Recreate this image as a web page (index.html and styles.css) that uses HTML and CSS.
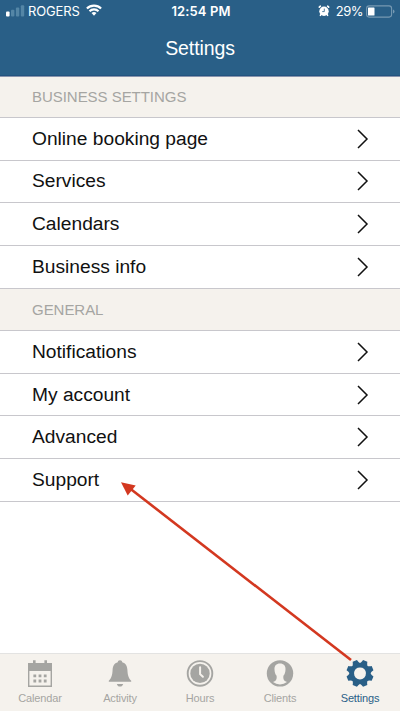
FILE: index.html
```html
<!DOCTYPE html>
<html lang="en">
<head>
<meta charset="utf-8">
<title>Settings</title>
<link rel="stylesheet" href="styles.css">
</head>
<body>
<div class="screen">
  <header class="header">
    <div class="status">
      <div class="status-left">
        <svg class="signal" width="19" height="12" viewBox="0 0 19 12"><rect x="0" y="6.6" width="3.6" height="4.8" rx="1" fill="#fff"/><g fill="#5486a6"><rect x="5" y="4.8" width="3.4" height="6.6" rx="1"/><rect x="9.9" y="2.6" width="3.4" height="8.8" rx="1"/><rect x="14.8" y="0.3" width="3.4" height="11.1" rx="1"/></g></svg>
        <span class="carrier">ROGERS</span>
        <svg class="wifi" width="16" height="12" viewBox="0 0 16 12"><g fill="none" stroke="#fff" stroke-width="2.1"><path d="M.9 4.6a10 10 0 0 1 14.2 0"/><path d="M3.5 7.2a6.4 6.4 0 0 1 9 0"/></g><path d="M5.5 9.1a3.6 3.6 0 0 1 5 0L8 11.7z" fill="#fff"/></svg>
      </div>
      <div class="time">12:54 PM</div>
      <div class="status-right">
        <svg class="alarm" width="12" height="12" viewBox="0 0 12 12"><circle cx="6" cy="6.2" r="4.7" fill="#fff"/><g stroke="#fff" stroke-width="1.6" stroke-linecap="round"><path d="M1.3 2.2 2.4 1.2M10.7 2.2 9.6 1.2M2.8 9.6l-.4.7M9.200 9.600l.4.7"/></g><path d="M6.300 3.600v3H4.200" fill="none" stroke="#295f87" stroke-width=".8"/></svg>
        <span class="percent">29%</span>
        <svg class="battery" width="29" height="13" viewBox="0 0 29 13"><rect x=".6" y=".9" width="25" height="11.2" rx="2.5" fill="none" stroke="#7799b2" stroke-width="1.1"/><rect x="2" y="2.4" width="6.5" height="8.2" rx=".6" fill="#fff"/><path d="M27 4.5q1.5.5 1.5 2t-1.5 2z" fill="#7799b2"/></svg>
      </div>
    </div>
    <h1 class="title">Settings</h1>
  </header>
  <main class="content">
    <h2 class="section">BUSINESS SETTINGS</h2>
    <ul class="list">
      <li class="row"><span>Online booking page</span><svg class="chevron" viewBox="0 0 12 20"><path d="M1 1l9 9-9 9"/></svg></li>
      <li class="row"><span>Services</span><svg class="chevron" viewBox="0 0 12 20"><path d="M1 1l9 9-9 9"/></svg></li>
      <li class="row"><span>Calendars</span><svg class="chevron" viewBox="0 0 12 20"><path d="M1 1l9 9-9 9"/></svg></li>
      <li class="row"><span>Business info</span><svg class="chevron" viewBox="0 0 12 20"><path d="M1 1l9 9-9 9"/></svg></li>
    </ul>
    <h2 class="section general">GENERAL</h2>
    <ul class="list">
      <li class="row"><span>Notifications</span><svg class="chevron" viewBox="0 0 12 20"><path d="M1 1l9 9-9 9"/></svg></li>
      <li class="row"><span>My account</span><svg class="chevron" viewBox="0 0 12 20"><path d="M1 1l9 9-9 9"/></svg></li>
      <li class="row"><span>Advanced</span><svg class="chevron" viewBox="0 0 12 20"><path d="M1 1l9 9-9 9"/></svg></li>
      <li class="row"><span>Support</span><svg class="chevron" viewBox="0 0 12 20"><path d="M1 1l9 9-9 9"/></svg></li>
    </ul>
  </main>
  <nav class="tabs">
    <div class="tab">
      <svg class="icon" viewBox="0 0 28 28"><path fill="currentColor" fill-rule="evenodd" d="M2 4h5V1.2h2.6V4h8.800V1.200H21V4h5v24H2zM3.400 12v14.400h21.200V12z"/><g fill="currentColor"><path d="M7.400 15.500h2.800v2.800H7.400zM12.600 15.500h2.800v2.800h-2.800zM17.800 15.500h2.800v2.800h-2.800zM7.400 20.600h2.800v2.800H7.400zM12.600 20.600h2.800v2.800h-2.800zM17.800 20.600h2.800v2.800h-2.800z"/></g></svg>
      <span>Calendar</span>
    </div>
    <div class="tab">
      <svg class="icon" viewBox="0 0 28 28"><path fill="currentColor" d="M14 1.200c1.400 0 2.200.8 2.200 2 3.600 1 5 3.800 5.200 7.600.3 5.400 1.100 8.500 3.800 10.900v1.100H2.800v-1.100c2.700-2.400 3.500-5.500 3.800-10.900.2-3.800 1.600-6.600 5.200-7.600 0-1.200.8-2 2.200-2zM10.800 25h6.400c-.5 1.700-1.600 2.600-3.200 2.600S11.300 26.700 10.800 25z"/></svg>
      <span>Activity</span>
    </div>
    <div class="tab">
      <svg class="icon" viewBox="0 0 28 28"><circle cx="14" cy="14.400" r="12.300" fill="none" stroke="currentColor" stroke-width="1.900"/><circle cx="14" cy="14.400" r="9.700" fill="currentColor"/><path d="M14.100 8.200v6.900l2.800 2.700" fill="none" stroke="#f5f2ed" stroke-width="2" stroke-linecap="round"/></svg>
      <span>Hours</span>
    </div>
    <div class="tab">
      <svg class="icon" viewBox="0 0 28 28"><circle cx="14" cy="14.400" r="13.200" fill="currentColor"/><path fill="#f5f2ed" d="M14 4.600c3.700 0 5.700 2.300 5.500 5.800-.1 3-.9 4.800-2.100 6.400-.3 2.500.1 4.300 1.400 5.200l2.200 1.100A11.500 11.500 0 0 1 14 25.600a11.500 11.500 0 0 1-7-2.500l2.200-1.100c1.300-.9 1.700-2.700 1.400-5.200-1.200-1.600-2-3.400-2.100-6.400-.2-3.500 1.800-5.800 5.500-5.800z"/></svg>
      <span>Clients</span>
    </div>
    <div class="tab active">
      <svg class="icon" viewBox="0 0 28 28"><g transform="translate(14 14.400) rotate(22.500)"><circle r="8.200" fill="none" stroke="currentColor" stroke-width="4.400"/><g fill="currentColor"><path id="tooth" d="M-4.400-9Q-2.800-11.200-2.300-13.600h4.600Q2.800-11.200 4.400-9z"/><use href="#tooth" transform="rotate(45)"/><use href="#tooth" transform="rotate(90)"/><use href="#tooth" transform="rotate(135)"/><use href="#tooth" transform="rotate(180)"/><use href="#tooth" transform="rotate(225)"/><use href="#tooth" transform="rotate(270)"/><use href="#tooth" transform="rotate(315)"/></g></g></svg>
      <span>Settings</span>
    </div>
  </nav>
  <svg class="pointer" viewBox="0 0 400 711"><path d="M351 660 130 488.500" stroke="#d33820" stroke-width="2.600"/><path d="M121 482.200l14.700 3.300-8 10.100z" fill="#d33820"/></svg>
</div>
</body>
</html>
```
FILE: styles.css
```css
* { box-sizing: border-box; }
body { margin: 0; font-family: "Liberation Sans", Arial, sans-serif; background: #fff; }
.screen { position: relative; width: 400px; height: 711px; display: flex; flex-direction: column; overflow: hidden; }
.header { height: 77px; flex: none; background: #295f87; border-bottom: 1px solid #8794ad; color: #fff; box-shadow: inset 0 -1px #23537f; }
.status { height: 22px; display: grid; grid-template-columns: 1fr auto 1fr; align-items: center; padding: 0 5px 0 6px; font-family: Inter, sans-serif; font-size: 13px; line-height: 22px; }
.status-left, .status-right { display: flex; align-items: center; }
.status-right { justify-content: flex-end; }
.carrier { margin-left: 3px; letter-spacing: -.15px; }
.wifi { margin-left: 6px; }
.signal { margin-top: -1px; }
.wifi { margin-top: -2px; }
.time { padding-left: 1px; font-weight: 600; letter-spacing: .1px; }
.alarm { margin: -1px 6px 0 0; }
.percent { margin-right: 3px; letter-spacing: -.5px; }
.title { margin: 14px 0 0; text-align: center; font-size: 19.500px; font-weight: 400; line-height: 24px; letter-spacing: -.1px; }
.content { flex: 1; }
.section { height: 41px; margin: 0; padding: 0 32px; background: #f5f2ed; border-bottom: 1px solid #c8c7cc; color: #a5a5a2; font-size: 15px; font-weight: 400; line-height: 40px; letter-spacing: -.04px; }
.general { height: 42.650px; line-height: 42px; }
.list { margin: 0; padding: 0; list-style: none; }
.row { height: 42.650px; display: flex; align-items: center; justify-content: space-between; padding: 0 31px 0 32px; border-bottom: 1px solid #c8c7cc; color: #111; font-size: 19.200px; line-height: 22px; }
.chevron { width: 12px; height: 20px; fill: none; stroke: #111; stroke-width: 1.500; }
.tabs { height: 58px; flex: none; display: grid; grid-template-columns: repeat(5, 1fr); background: #f5f2ed; border-top: 1px solid #e3e3e2; }
.tab { display: flex; flex-direction: column; align-items: center; padding-top: 5px; color: #a5a5a2; font-size: 11px; line-height: 14px; letter-spacing: -.15px; }
.active { color: #295f87; }
.icon { width: 28px; height: 28px; margin-bottom: 4px; }
.pointer { position: absolute; inset: 0; width: 400px; height: 711px; pointer-events: none; }
```
